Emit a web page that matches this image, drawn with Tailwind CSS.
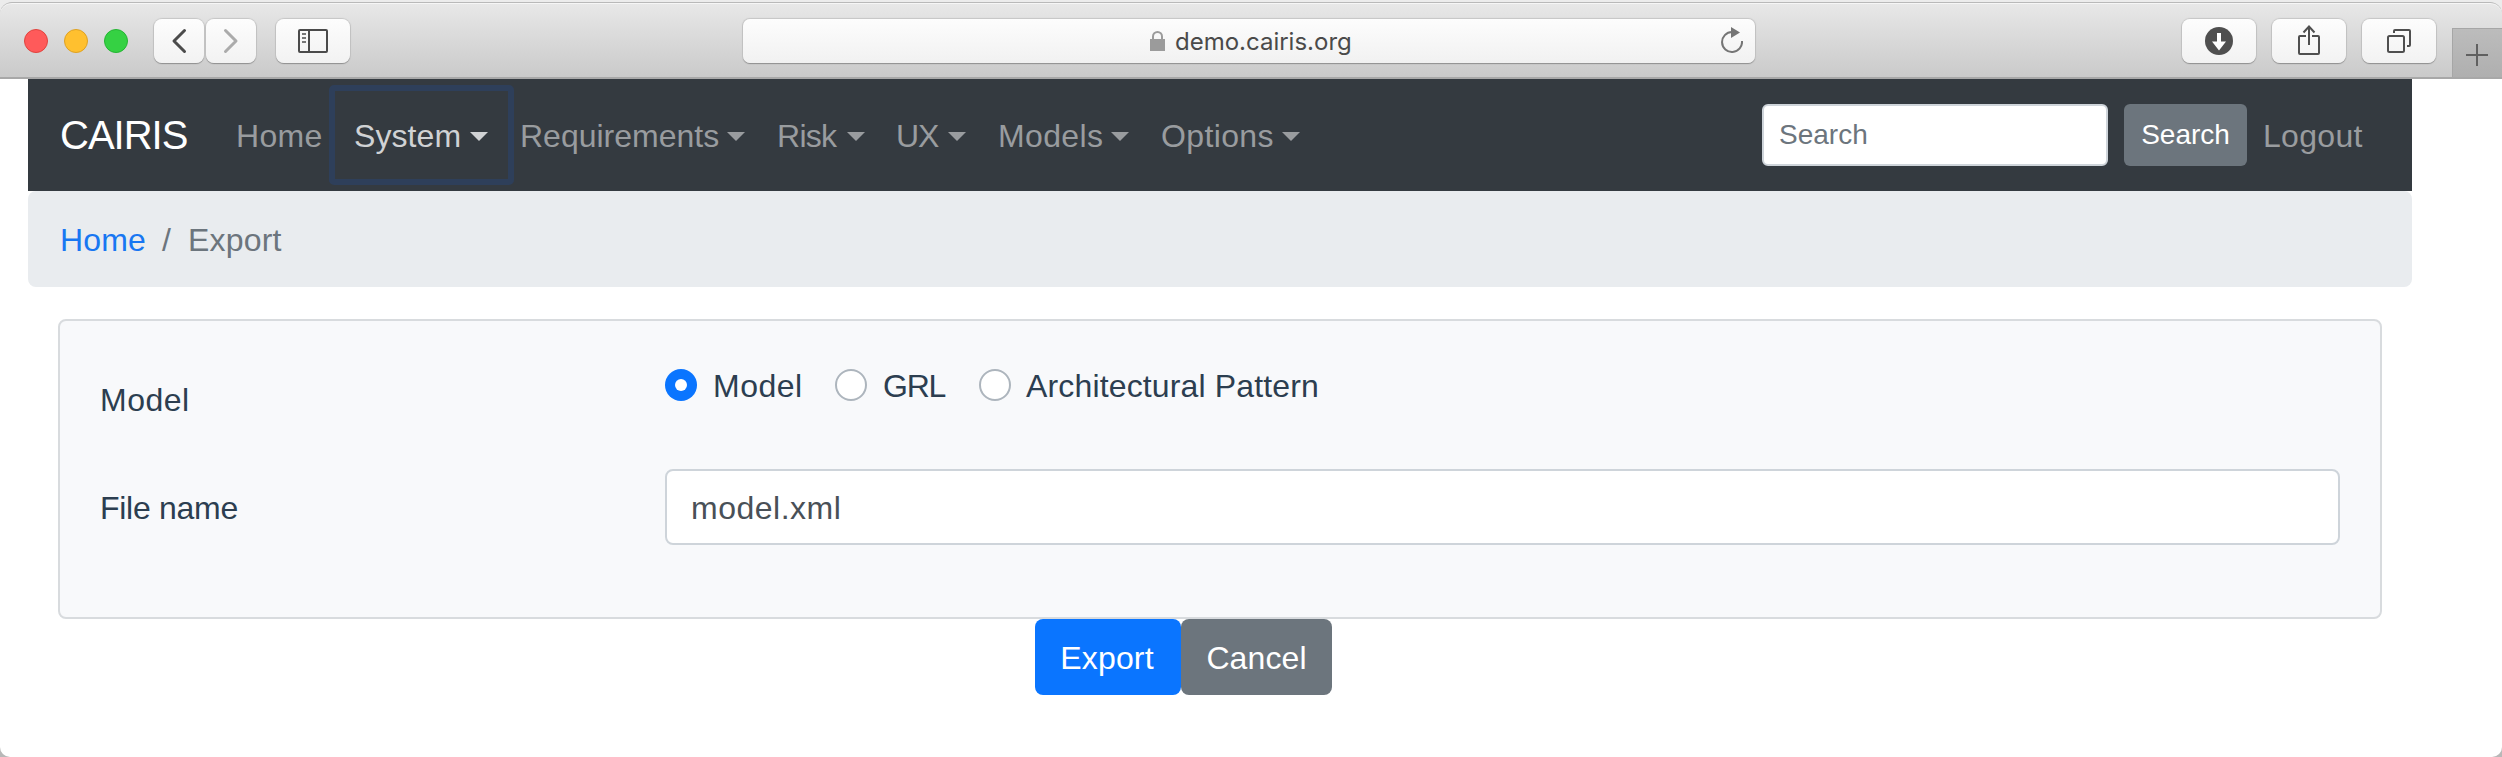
<!DOCTYPE html>
<html lang="en">
<head>
<meta charset="utf-8">
<title>CAIRIS</title>
<script src="https://cdn.jsdelivr.net/npm/@tailwindcss/browser@4"></script>
</head>
<body class="h-[757px] overflow-hidden bg-[#b8b8b8] font-['Liberation_Sans',Arial,sans-serif] text-[32px] leading-[48px] text-[#2c3e50]">
<div class="flex h-[757px] flex-col overflow-hidden rounded-b-[10px] bg-white">

  <!-- Browser toolbar -->
  <div class="h-[79px] bg-[#ececec] pt-[2px]">
    <header class="flex h-[77px] rounded-t-[12px] border-t border-b-2 border-t-[#b9b9b9] border-b-[#a8a8a8] bg-linear-to-b from-[#e8e8e8] to-[#cacaca] pl-[24px] shadow-[inset_0_1px_0_#f6f6f6]">
      <div class="mt-[26px] flex gap-4">
        <span class="size-6 rounded-full border border-[#e0443e] bg-[#ff5a5a]"></span>
        <span class="size-6 rounded-full border border-[#dea123] bg-[#ffc02f]"></span>
        <span class="size-6 rounded-full border border-[#24b533] bg-[#35d143]"></span>
      </div>
      <div class="mt-4 ml-[26px] flex h-[44px] gap-[2px]">
        <button class="flex w-[50px] items-center justify-center rounded-[8px] bg-linear-to-b from-[#fdfdfd] to-[#f2f2f2] shadow-[0_1px_1px_#8f8f8f,0_0_1px_1px_#c6c6c6]">
          <svg class="h-[26px] w-4" viewBox="0 0 16 26" fill="none" stroke="#4b4b4b" stroke-width="3" stroke-linecap="round" stroke-linejoin="round"><path d="M13.5 2.5 3 13l10.500 10.500"/></svg>
        </button>
        <button class="flex w-[50px] items-center justify-center rounded-[8px] bg-linear-to-b from-[#fdfdfd] to-[#f2f2f2] shadow-[0_1px_1px_#8f8f8f,0_0_1px_1px_#c6c6c6]">
          <svg class="h-[26px] w-4" viewBox="0 0 16 26" fill="none" stroke="#ababab" stroke-width="3" stroke-linecap="round" stroke-linejoin="round"><path d="M2.500 2.500 13 13 2.500 23.500"/></svg>
        </button>
      </div>
      <button class="mt-4 ml-[20px] flex h-[44px] w-[74px] items-center justify-center rounded-[8px] bg-linear-to-b from-[#fdfdfd] to-[#f2f2f2] shadow-[0_1px_1px_#8f8f8f,0_0_1px_1px_#c6c6c6]">
        <svg class="h-6 w-[30px]" viewBox="0 0 30 24" fill="none" stroke="#4b4b4b" stroke-width="2"><rect x="1" y="1" width="28" height="22" rx="1"/><path d="M11 1v22"/><path stroke="#777" d="M4 5h4M4 9h4M4 13h4"/></svg>
      </button>
      <div class="mt-4 ml-[393px] flex h-[44px] w-[1013px] items-center rounded-[7px] bg-linear-to-b from-[#fdfdfd] to-[#f1f1f1] shadow-[0_1px_1px_#8f8f8f,0_0_1px_1px_#c6c6c6]">
        <svg class="ml-[407px] h-5 w-[15px]" viewBox="0 0 15 20"><path d="M0 8h15v12H0z" fill="#9b9b9b"/><path d="M3 9V5.500a4.500 4.500 0 0 1 9 0V9" fill="none" stroke="#9b9b9b" stroke-width="2"/></svg>
        <span class="ml-[10px] w-[200px] pt-[2px] font-['Inter',sans-serif] text-[24px] text-[#4a4a4a]">demo.cairis.org</span>
        <svg class="mt-[-2px] ml-[346px] h-[26px] w-[22px]" viewBox="0 0 22 26" fill="none" stroke="#757575" stroke-width="2"><path d="M11 5A10 10 0 1 0 21 14"/><path d="M10 0 19 5.500 10 11z" fill="#757575" stroke="none"/></svg>
      </div>
      <div class="mt-4 ml-[427px] flex h-[44px] gap-4">
        <button class="flex w-[74px] items-center justify-center rounded-[8px] bg-linear-to-b from-[#fdfdfd] to-[#f2f2f2] shadow-[0_1px_1px_#8f8f8f,0_0_1px_1px_#c6c6c6]">
          <svg class="size-7" viewBox="0 0 28 28"><circle cx="14" cy="14" r="14" fill="#4f4f4f"/><path fill="#fff" d="M12 6h4v8.500h5L14 23.500 7 14.500h5z"/></svg>
        </button>
        <button class="flex w-[74px] items-center justify-center rounded-[8px] bg-linear-to-b from-[#fdfdfd] to-[#f2f2f2] shadow-[0_1px_1px_#8f8f8f,0_0_1px_1px_#c6c6c6]">
          <svg class="mt-[-2px] h-[30px] w-[22px]" viewBox="0 0 22 30" fill="none" stroke="#4f4f4f" stroke-width="2"><path d="M8 11H2a1 1 0 0 0-1 1v16a1 1 0 0 0 1 1h18a1 1 0 0 0 1-1V12a1 1 0 0 0-1-1h-6M11 20V2M5.500 7.500 11 1.500l5.500 6"/></svg>
        </button>
        <button class="flex w-[74px] items-center justify-center rounded-[8px] bg-linear-to-b from-[#fdfdfd] to-[#f2f2f2] shadow-[0_1px_1px_#8f8f8f,0_0_1px_1px_#c6c6c6]">
          <svg class="size-6" viewBox="0 0 24 24" fill="none" stroke="#4f4f4f" stroke-width="2"><rect x="1" y="7" width="16" height="16" rx="1.500"/><path d="M7 4V2a1 1 0 0 1 1-1h14a1 1 0 0 1 1 1v14a1 1 0 0 1-1 1h-2"/></svg>
        </button>
      </div>
      <button class="mt-[25px] ml-4 flex h-[49px] w-[50px] items-center justify-center border-t border-l border-[#a6a6a6] bg-linear-to-b from-[#bcbcbc] to-[#afafaf]">
        <svg class="mt-[3px] mr-px size-[22px]" viewBox="0 0 22 22" stroke="#606060" stroke-width="2"><path d="M11 0v22M0 11h22"/></svg>
      </button>
    </header>
  </div>

  <!-- Navigation bar -->
  <nav class="mr-[90px] ml-[28px] flex h-[112px] items-center bg-[#343a40] pt-[2px] text-[#999c9f]">
    <a class="ml-[32px] w-[176px] pb-[3px] text-[40px] tracking-[-1px] text-white">CAIRIS</a>
    <div class="flex">
      <a class="w-[118px] tracking-[0.3px]">Home</a>
      <a class="relative mr-[32px] flex w-[134px] items-center justify-between tracking-[0.09px] text-[#d0d2d4]">System
        <span class="h-0 w-0 border-x-[9px] border-t-[9px] border-x-transparent border-t-current"></span>
        <span class="absolute -top-[27px] -right-[26px] -bottom-[25px] -left-[25px] rounded-[5px] border-[6px] border-[#2e3f5a]"></span>
      </a>
      <a class="mr-[32px] flex w-[225px] items-center justify-between tracking-[0px]">Requirements<span class="h-0 w-0 border-x-[9px] border-t-[9px] border-x-transparent border-t-current"></span></a>
      <a class="mr-[31px] flex w-[88px] items-center justify-between tracking-[-0.7px]">Risk<span class="h-0 w-0 border-x-[9px] border-t-[9px] border-x-transparent border-t-current"></span></a>
      <a class="mr-[32px] flex w-[70px] items-center justify-between tracking-[-1.1px]">UX<span class="h-0 w-0 border-x-[9px] border-t-[9px] border-x-transparent border-t-current"></span></a>
      <a class="mr-[32px] flex w-[131px] items-center justify-between tracking-[0.37px]">Models<span class="h-0 w-0 border-x-[9px] border-t-[9px] border-x-transparent border-t-current"></span></a>
      <a class="flex w-[139px] items-center justify-between tracking-[0.37px]">Options<span class="h-0 w-0 border-x-[9px] border-t-[9px] border-x-transparent border-t-current"></span></a>
    </div>
    <form class="ml-auto flex h-[62px] -translate-y-px text-[28px]">
      <input class="w-[346px] rounded-[6px] border-2 border-[#ced4da] bg-white px-[15px] placeholder:text-[#6c757d]" placeholder="Search">
      <button type="button" class="ml-4 w-[123px] rounded-[6px] bg-[#6c757d] text-white">Search</button>
    </form>
    <a class="mr-[46px] ml-4 w-[103px] tracking-[0.3px]">Logout</a>
  </nav>

  <!-- Breadcrumb -->
  <div class="mr-[90px] ml-[28px] flex h-[96px] items-center rounded-[8px] bg-[#e9ecef] pt-[2px] pl-8 text-[#6c757d]">
    <a class="w-[102px] tracking-[0.15px] text-[#1877f2]">Home</a>
    <span class="w-[26px]">/</span>
    <span class="tracking-[0.18px]">Export</span>
  </div>

  <!-- Export form -->
  <main class="mt-[32px] mr-[120px] ml-[58px] flex h-[300px] flex-col rounded-[8px] border-2 border-[#d8dbde] bg-[#f8f9fb] pr-10 pl-10">
    <div class="flex pt-[40px]">
      <label class="w-[565px] pt-[15px] tracking-[0.5px]">Model</label>
      <div class="flex h-[48px] items-center">
        <span class="flex size-8 items-center justify-center rounded-full bg-[#0a75ff]"><span class="size-3 rounded-full bg-white"></span></span>
        <span class="ml-4 w-[122px] pt-[2px] tracking-[0.5px]">Model</span>
        <span class="size-8 rounded-full border-2 border-[#adb5bd] bg-white"></span>
        <span class="ml-4 w-[96px] pt-[2px] tracking-[-1.2px]">GRL</span>
        <span class="size-8 rounded-full border-2 border-[#adb5bd] bg-white"></span>
        <span class="ml-[15px] pt-[2px] tracking-[0.15px]">Architectural Pattern</span>
      </div>
    </div>
    <div class="mt-[45px] flex h-[76px] items-center">
      <label class="w-[565px] pt-[2px] tracking-[-0.28px]">File name</label>
      <input class="h-full flex-1 rounded-[8px] border-2 border-[#ced4da] bg-white px-[24px] pt-[2px] tracking-[0.5px] text-[#495057]" value="model.xml">
    </div>
  </main>
  <div class="ml-[1035px] flex h-[76px] text-white">
    <button class="w-[146px] rounded-[8px] bg-[#0a75ff] pt-[2px] pr-[2px] tracking-[0.18px]">Export</button>
    <button class="w-[151px] rounded-[8px] bg-[#6c757d] pt-[2px] tracking-[0.1px]">Cancel</button>
  </div>
</div>
</body>
</html>
